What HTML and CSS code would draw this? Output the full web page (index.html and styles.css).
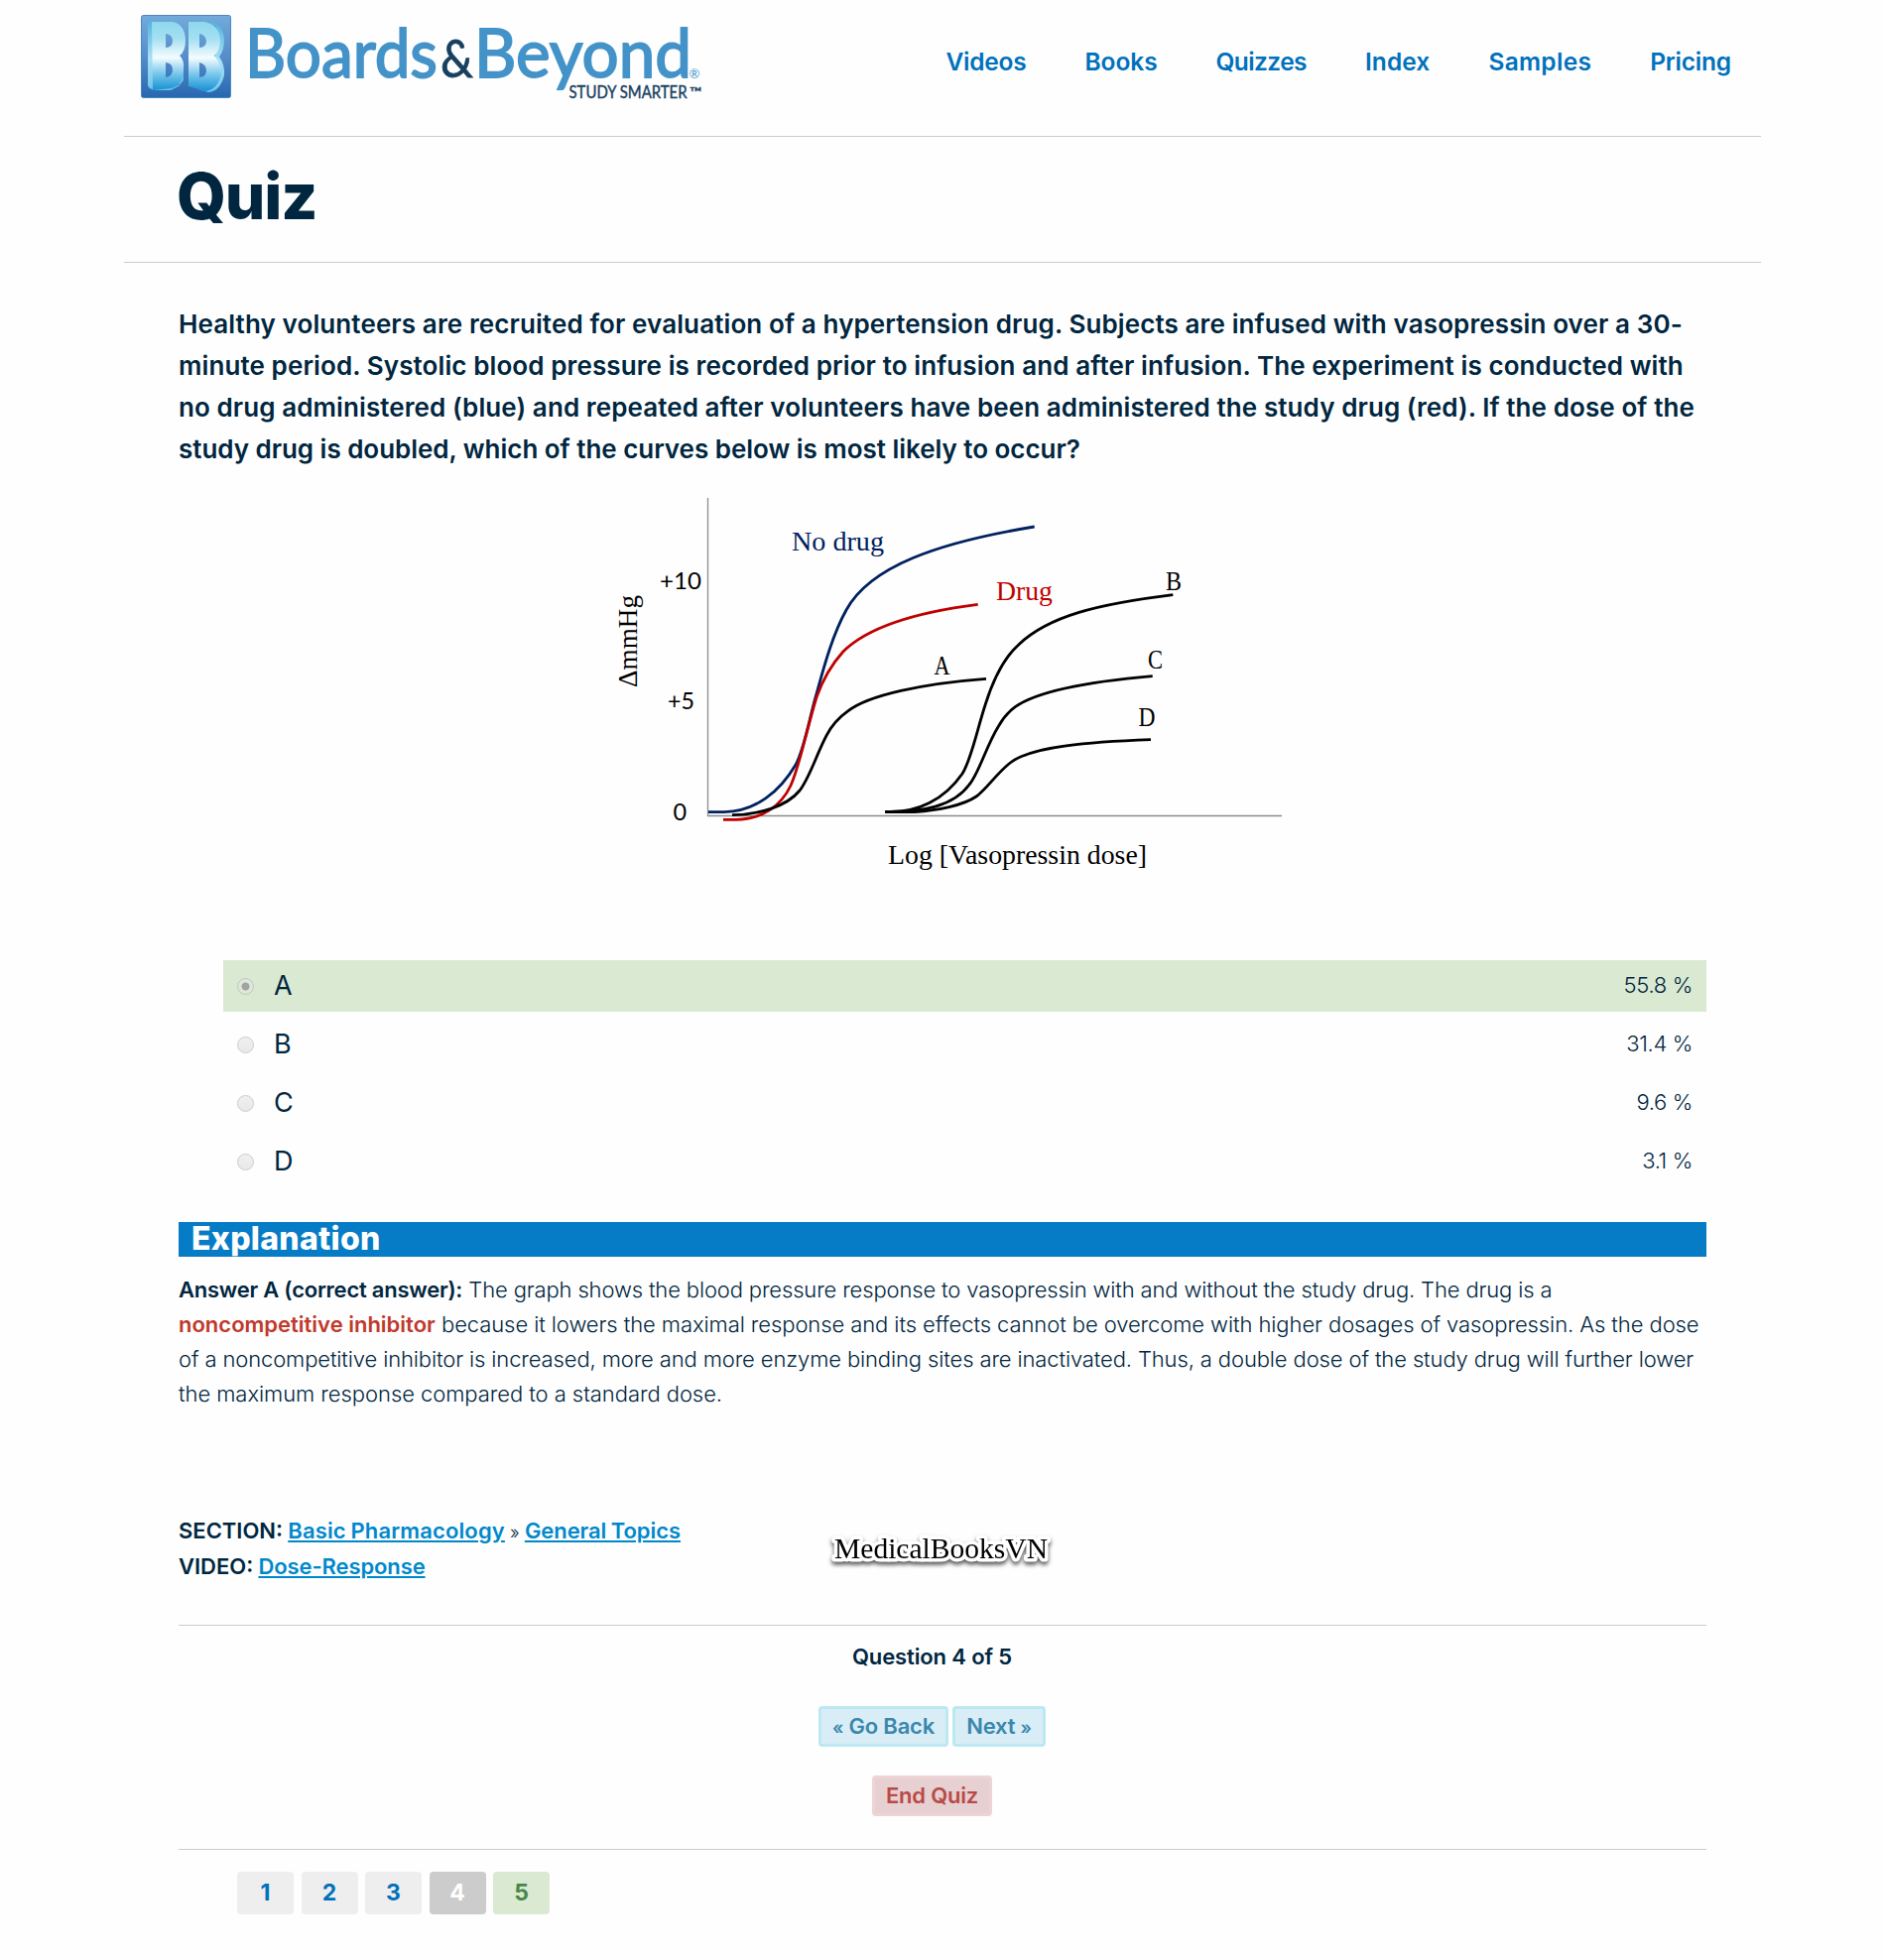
FILE: index.html
```html
<!DOCTYPE html>
<html lang="en">
<head>
<meta charset="utf-8">
<title>Quiz - Boards &amp; Beyond</title>
<link rel="stylesheet" href="styles.css">
</head>
<body>
<div class="page">
  <header class="header">
    <svg class="logo" width="580" height="110" viewBox="135 0 580 110" role="img" aria-label="Boards and Beyond">
      <defs>
        <linearGradient id="tile" x1="0" y1="0" x2="0" y2="1"><stop offset="0" stop-color="#72aadb"/><stop offset=".5" stop-color="#568dca"/><stop offset="1" stop-color="#2767b0"/></linearGradient>
        <linearGradient id="face" x1="0" y1="0" x2="0" y2="1"><stop offset="0" stop-color="#8ed8ee"/><stop offset=".25" stop-color="#a5e0f2"/><stop offset=".52" stop-color="#f4fcff"/><stop offset=".75" stop-color="#7cc8ec"/><stop offset="1" stop-color="#1590d4"/></linearGradient>
        <linearGradient id="side" x1="0" y1="0" x2="0" y2="1"><stop offset="0" stop-color="#4fb4e0"/><stop offset=".55" stop-color="#a9e2f5"/><stop offset="1" stop-color="#6fc6ea"/></linearGradient>
      </defs>
      <rect x="142.500" y="15.500" width="90" height="83" rx="2" fill="url(#tile)" stroke="#4a87c4"/>
      <path d="M149 21h6v69l-6-3z" fill="url(#side)"/>
      <path d="M149 88l6 3h17l8-4 5-6v-20l-5 25z" fill="#62c0e8"/>
      <path fill-rule="evenodd" d="M153 22H174Q186 24 187 40Q187 52 181 56Q186 60 185 71Q183 87 172 89L154 91Z M167 34V48Q174 48 174 41Q174 35 167 34Z M167 63V78Q174 77 174 70Q174 64 167 63Z" fill="url(#face)"/>
      <path d="M208 22Q224 22 226 39Q226 51 221 57Q227 66 226 76Q222 92 210 93L200 90L216 80L218 26Z" fill="url(#side)"/>
      <path fill-rule="evenodd" d="M190 22H206Q221 25 222 40Q222 51 216 56Q223 64 223 74Q220 90 207 92L190 87Z M201 34V48Q208 48 208 41Q207 35 201 34Z M201 63V78Q208 78 208 71Q208 65 201 63Z" fill="url(#face)"/>
      <g font-family="Lato, sans-serif" fill="#4393c9">
        <g font-size="67.500" stroke="#4393c9" stroke-width="1.800">
          <text x="247" y="77.500" textLength="194" lengthAdjust="spacingAndGlyphs">Boards</text>
          <text x="478" y="77.500" textLength="219" lengthAdjust="spacingAndGlyphs">Beyond</text>
        </g>
        <text x="444" y="78" font-size="53" fill="#173f5f" stroke="#173f5f" stroke-width=".8" textLength="33" lengthAdjust="spacingAndGlyphs">&amp;</text>
        <text x="694.500" y="78.500" font-size="14" textLength="11" lengthAdjust="spacingAndGlyphs">®</text>
        <g fill="#173f5f" stroke="#173f5f" stroke-width=".4">
          <text x="573.500" y="99" font-size="16.500" textLength="119" lengthAdjust="spacingAndGlyphs">STUDY SMARTER</text>
          <text x="695" y="98" font-size="14" textLength="12" lengthAdjust="spacingAndGlyphs">™</text>
        </g>
      </g>
    </svg>
    <nav class="nav">
      <a>Videos</a><a>Books</a><a>Quizzes</a><a>Index</a><a>Samples</a><a>Pricing</a>
    </nav>
  </header>
  <div class="title"><h1>Quiz</h1></div>
  <main class="content">
    <p class="question">
      <span class="q1">Healthy volunteers are recruited for evaluation of a hypertension drug. Subjects are infused with vasopressin over a 30-</span>
      <span class="q2">minute period. Systolic blood pressure is recorded prior to infusion and after infusion. The experiment is conducted with</span>
      <span class="q3">no drug administered (blue) and repeated after volunteers have been administered the study drug (red). If the dose of the</span>
      <span class="q4">study drug is doubled, which of the curves below is most likely to occur?</span>
    </p>
    <svg class="chart" width="720" height="420" viewBox="600 480 720 420">
      <path d="M713.500 502V822.500H1292" fill="none" stroke="#8a8c8e" stroke-width="1.300"/>
      <g fill="none" stroke-width="2.800">
        <path stroke="#002060" d="M714 818.700H730C762 818 786 798 802 771C810 757 815 728 822 703C829 678 838 642 853 615C877 571 945 547 1042.700 531"/>
        <path stroke="#c00000" d="M729 826.300H742C768 826 787 813 797 792C806 772 813 736 823 703C829 686 838 670 850 656.700C875 632 925 617 985.700 609.300"/>
        <g stroke="#000">
          <path d="M738 821.700C766 821 793 813 806 797C816 784 822 763 833 741.700C839 730 846 723 855 716.700C875 701 930 689 994 684.300"/>
          <path d="M892.300 818.300C925 820 952 806 970 780C979 766 985 735 993.300 710C999 692 1010 665 1026.700 650C1057 621 1107 609 1182.300 599.700"/>
          <path d="M892.300 818.300C930 819 961 813 977 791C987 779 994 752 1006.700 731.700C1011 724 1016 718 1023.300 712.700C1047 696 1100 687 1161.700 681.700"/>
          <path d="M892.300 818.500H922C945 817 971 812 984 803C995 795 1005 779 1018.300 769C1040 752 1100 748 1160 745.700"/>
        </g>
      </g>
      <g class="serif">
        <text x="798" y="555" fill="#002060" textLength="93" lengthAdjust="spacingAndGlyphs">No drug</text>
        <text x="1004" y="605" fill="#c00000" textLength="57" lengthAdjust="spacingAndGlyphs">Drug</text>
        <text x="941.500" y="679.500" textLength="16" lengthAdjust="spacingAndGlyphs">A</text>
        <text x="1175" y="594.500" textLength="16" lengthAdjust="spacingAndGlyphs">B</text>
        <text x="1157" y="674" textLength="15" lengthAdjust="spacingAndGlyphs">C</text>
        <text x="1147.500" y="731.500" textLength="17" lengthAdjust="spacingAndGlyphs">D</text>
        <text x="895" y="871" textLength="261" lengthAdjust="spacingAndGlyphs">Log [Vasopressin dose]</text>
        <text transform="translate(642 693) rotate(-90)" textLength="93" lengthAdjust="spacingAndGlyphs">ΔmmHg</text>
      </g>
      <g class="ticks">
        <text x="665" y="593.500" textLength="42" lengthAdjust="spacingAndGlyphs">+10</text>
        <text x="673" y="714.500" textLength="27" lengthAdjust="spacingAndGlyphs">+5</text>
        <text x="678.500" y="827">0</text>
      </g>
    </svg>
    <ul class="answers">
      <li class="correct"><i class="radio checked"></i><b>A</b><span>55.8 %</span></li>
      <li><i class="radio"></i><b>B</b><span>31.4 %</span></li>
      <li><i class="radio"></i><b>C</b><span>9.6 %</span></li>
      <li><i class="radio"></i><b>D</b><span>3.1 %</span></li>
    </ul>
    <h2 class="bar">Explanation</h2>
    <p class="explanation">
      <span><strong class="lead">Answer A (correct answer):</strong> <span class="e1">The graph shows the blood pressure response to vasopressin with and without the study drug. The drug is a</span></span>
      <span><strong class="term">noncompetitive inhibitor</strong> <span class="e2">because it lowers the maximal response and its effects cannot be overcome with higher dosages of vasopressin. As the dose</span></span>
      <span class="e3">of a noncompetitive inhibitor is increased, more and more enzyme binding sites are inactivated. Thus, a double dose of the study drug will further lower</span>
      <span class="e4">the maximum response compared to a standard dose.</span>
    </p>
    <div class="meta">
      <div><strong>SECTION:</strong> <a class="basic">Basic Pharmacology</a> <small>»</small> <a class="general">General Topics</a></div>
      <div><strong>VIDEO:</strong> <a class="video">Dose-Response</a></div>
      <svg class="watermark" width="240" height="60" viewBox="0 0 240 60">
        <text x="13" y="35.500" textLength="215" lengthAdjust="spacingAndGlyphs">MedicalBooksVN</text>
      </svg>
    </div>
    <section class="controls">
      <p>Question 4 of 5</p>
      <div class="pair"><a class="btn back"><small>«</small> Go Back</a><a class="btn next">Next <small>»</small></a></div>
      <a class="btn end">End Quiz</a>
    </section>
    <div class="pager"><a>1</a><a>2</a><a>3</a><a class="current">4</a><a class="right">5</a></div>
  </main>
</div>
</body>
</html>
```
FILE: styles.css
```css
* { box-sizing: border-box; }
body { margin: 0; background: #fefefe; color: #002640; font-family: Inter, "Open Sans", sans-serif; }
h1, h2, p, ul { margin: 0; padding: 0; }
.page { width: 1650px; margin-left: 125px; }

.header { height: 138px; border-bottom: 1px solid #ccc; display: flex; justify-content: space-between; padding: 0 30px 0 10px; }
.logo { display: block; }
.nav { display: flex; gap: 59px; padding-top: 47px; font-size: 24.5px; line-height: 30px; font-weight: 600; color: #0071bc; white-space: nowrap; }
.nav a:nth-child(1) { letter-spacing: -.23px; }
.nav a:nth-child(2) { letter-spacing: -.08px; }
.nav a:nth-child(3) { letter-spacing: -.6px; }
.nav a:nth-child(4) { letter-spacing: .1px; }
.nav a:nth-child(5) { letter-spacing: .3px; }
.nav a:nth-child(6) { letter-spacing: -.2px; }

.title { height: 127px; border-bottom: 1px solid #ccc; padding: 21px 0 0 53px; }
h1 { font-size: 64px; line-height: 78px; font-weight: 800; letter-spacing: -1.200px; }

.content { padding: 41px 55px 46px; }
.question, .explanation { white-space: nowrap; }
.question > span, .explanation > span { display: block; }
.question { font-size: 26px; line-height: 42px; font-weight: 600; }
.q1 { letter-spacing: .11px; }
.q2 { letter-spacing: .1px; }
.q3 { letter-spacing: .088px; }
.q4 { letter-spacing: -.03px; }

.chart { display: block; margin: 6px 0 68px 420px; }
.serif { font: 27.5px "Liberation Serif", serif; }
.ticks { font: 23.500px Lato, sans-serif; }

.answers { list-style: none; margin-left: 45px; display: grid; gap: 7px; }
.answers li { height: 52px; display: flex; align-items: center; padding: 0 14px 2px; }
.answers b { font-size: 27px; font-weight: 400; margin-left: 20px; }
.answers span { margin-left: auto; font-size: 22px; font-weight: 300; letter-spacing: -.35px; }
.correct { background: #dae9d2; }
.radio { width: 17px; height: 17px; border: 1px solid #ccc; border-radius: 50%; background: linear-gradient(#f0f0f0, #e8e8e8); margin-top: 3px; }
.checked { background: radial-gradient(circle, #a0a69e 0 3.500px, #dfe6db 4.500px); border-color: #bfc8ba; }

.bar { margin-top: 35px; height: 35px; background: #077cc6; color: #fff; font-size: 32px; line-height: 33px; font-weight: 800; padding-left: 13px; letter-spacing: .3px; }

.explanation { margin-top: 15.500px; font-size: 22px; line-height: 35px; font-weight: 300; }
strong { font-weight: 600; }
.lead { letter-spacing: -.24px; }
.term { color: #c0392b; }
.e1 { letter-spacing: -.146px; }
.e2 { letter-spacing: -.085px; }
.e3 { letter-spacing: -.125px; }
.e4 { letter-spacing: -.06px; }

.meta { position: relative; margin-top: 103.500px; height: 113px; border-bottom: 1px solid #ccc; font-size: 22px; line-height: 35px; font-weight: 300; word-spacing: -1px; }
.meta a { color: #0088cc; font-weight: 600; text-decoration: underline; text-decoration-thickness: 2px; text-underline-offset: 2px; }
small { font-size: 18px; }
.basic { letter-spacing: .14px; }
.general { letter-spacing: -.07px; }
.video { letter-spacing: -.1px; }
.watermark { position: absolute; left: 648px; top: 9px; font: 29px "Liberation Serif", serif; filter: drop-shadow(0 3px 2px rgba(0, 0, 0, .65)); }
.watermark text { fill: #000; stroke: #fff; stroke-width: 7px; stroke-linejoin: round; paint-order: stroke; }

.controls { height: 226px; border-bottom: 1px solid #ccc; padding: 14px 21px 0 0; display: flex; flex-direction: column; align-items: center; font-size: 22px; font-weight: 600; line-height: 35px; white-space: nowrap; }
.controls p { letter-spacing: -.13px; }
.pair { display: flex; gap: 4px; margin: 32px 0 29px; }
.btn { height: 41px; border: 3px solid #bce8f1; border-radius: 4px; background: #d9edf7; color: #3a87ad; line-height: 34px; text-align: center; }
.back { width: 131px; letter-spacing: -.2px; }
.next { width: 94px; letter-spacing: -.2px; }
.end { width: 121px; background: #e6d0d1; border-color: #eed3d7; color: #b94a48; letter-spacing: -.2px; }

.pager { display: flex; gap: 7.500px; margin: 22px 0 0 59px; }
.pager a { width: 57px; height: 43px; border-radius: 4px; background: #eee; color: #0071bc; font-size: 23px; font-weight: 700; line-height: 42px; text-align: center; }
.pager .current { background: #ccc; color: #fff; }
.pager .right { background: #dae9d2; color: #468847; }
```
